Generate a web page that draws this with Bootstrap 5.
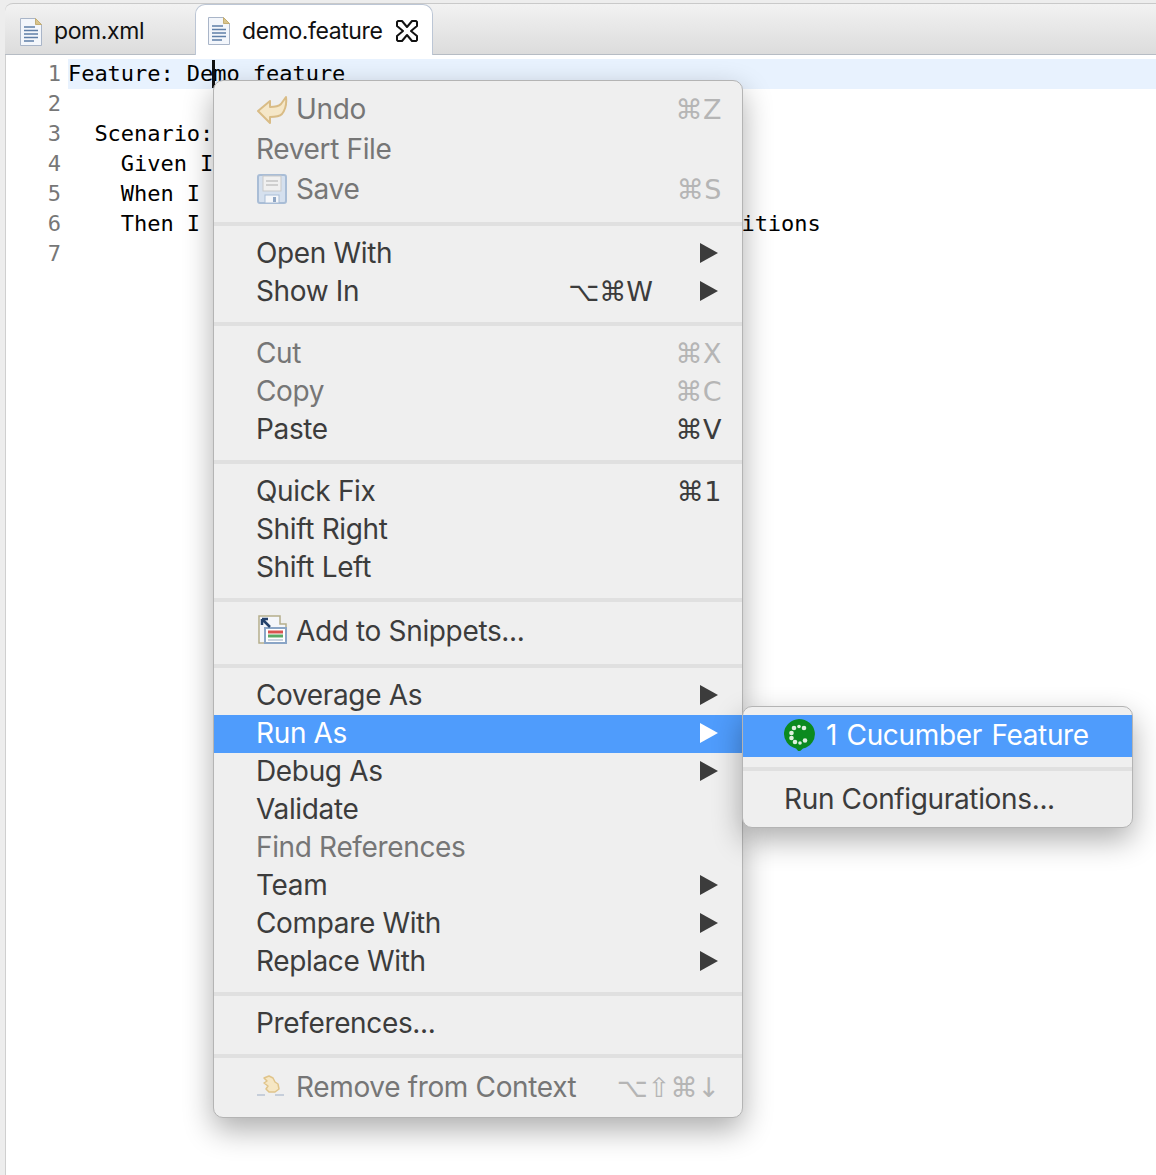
<!DOCTYPE html>
<html lang="en">
<head>
<meta charset="utf-8">
<title>demo.feature</title>
<link href="https://cdn.jsdelivr.net/npm/bootstrap@5.3.0/dist/css/bootstrap.min.css" rel="stylesheet">
<style>
html,body{height:100%;margin:0}
body{background:#fff;overflow:hidden;position:relative;width:1156px;height:1175px}
.ide-frame{height:1175px;background:#ededed;padding:3px 0 0 5px}
.ide-tabs{height:52px;border-top:1px solid #c9c9c9;border-bottom:1px solid #b6bcc4;background:linear-gradient(#f2f2f2,#dcdcdc);flex-wrap:nowrap;margin:0;position:relative;border-top-left-radius:8px}
.ide-tab{height:49px;display:flex;align-items:center;font:23px/1 Inter,"Liberation Sans",sans-serif;color:#111;letter-spacing:-.4px}
.ide-tab svg{flex:none}
.ide-tab-off{width:190px;padding-left:15px;padding-top:6px;gap:12px}
.ide-tab-on{width:238px;height:51px;padding-left:12px;padding-top:2px;gap:12px;background:#fff;border:1px solid #bcc6d5;border-bottom:0;border-radius:10px 10px 0 0}
.ide-close{margin-left:2px}
.ide-editor{background:#fff;height:1120px;border-left:1px solid #cfcfcf;padding-top:4px;font:22px/30px "DejaVu Sans Mono",monospace;color:#000;letter-spacing:-.04px}
.ide-line{display:flex;height:30px;white-space:pre}
.ide-num{width:55px;text-align:right;color:#777;flex:none}
.ide-code{margin-left:7px;flex:1}
.ide-current{background:#e8f2fe}
.ide-caret{position:absolute;left:212px;top:60px;width:3px;height:28px;background:#111}
.ctx-menu.dropdown-menu{display:block;position:absolute;background:#efefef;border:1px solid #b4b4b4;border-radius:10px;box-shadow:0 12px 30px rgba(0,0,0,.32);padding:0;font:28px/38px Inter,"Liberation Sans",sans-serif;color:#3c3c3c;min-width:0;letter-spacing:-.35px}
.ctx-main{left:213px;top:80px;width:530px;height:1038px;padding-top:8px!important}
.ctx-sub{left:742px;top:706px;width:391px;height:122px;padding-top:8px!important;z-index:1001}
.ctx-item.dropdown-item{display:flex;align-items:center;height:38px;padding:0 24px 0 42px;color:#3c3c3c;background:none;font-size:inherit;line-height:38px;white-space:nowrap}
.ctx-item.ctx-tall{height:40px}
.ctx-item.ctx-off{color:#767676}
.ctx-item.ctx-on,.ctx-item.ctx-on:hover{background:#4f9cfc;color:#fff}
.ctx-item.ctx-lift{padding-bottom:2px}
.ctx-label{flex:1;display:flex;align-items:center}
.ctx-icon{flex:none;margin-right:8px;width:32px;height:32px}
.ctx-key{font-family:"DejaVu Sans",sans-serif;font-size:27px;letter-spacing:.5px;margin-right:-4px;padding-top:2px;text-align:right;color:#3c3c3c;white-space:nowrap}
.ctx-off .ctx-key{color:#b5b5b5}
.ctx-key.ctx-key-wide{letter-spacing:0;margin-right:47px}
.ctx-key.ctx-key-w2{letter-spacing:0;margin-right:-2px}
.ctx-arrow{flex:none;width:18px;height:20px;margin-left:auto}
.ctx-sep.dropdown-divider{height:4px;background:#e0e0e0;border:0;opacity:1;margin:12px 0 8px}
.ctx-sep.ctx-gap-a{margin:13px 0 8px}
.ctx-sep.ctx-gap-b{margin:12px 0 9px}
.ctx-sep.ctx-gap-c{margin:13px 0 9px}
.ctx-sep.ctx-gap-d{margin:11px 0 8px}
.ctx-sep.ctx-gap-e{margin:12px 0 10px}
.ctx-sub .ctx-item.dropdown-item{padding-left:41px}
.ctx-sub .ctx-sep.dropdown-divider{margin:10px 0 9px}
.ctx-sub .ctx-item.ctx-sub-on{height:42px;word-spacing:2px;padding-bottom:2px}
.ctx-sub-on .ctx-icon{margin:0 11px 0 -1px}
</style>
</head>
<body>
<div class="ide-frame">
  <div class="ide-tabs d-flex">
    <div class="ide-tab ide-tab-off">
      <svg width="22" height="28" viewBox="2 1 22 28"><path d="M2.500 1.500h15l6 6v21h-21z" fill="#f3f6fb" stroke="#a9b5c8"/><path d="M17.500 1.500v6h6z" fill="#d8c48c" stroke="#c4ae74"/><path d="M6 10h11M6 13.500h14M6 17h14M6 20.500h14M6 24h10" stroke="#5f7fa8" stroke-width="1.600"/></svg>
      <span>pom.xml</span>
    </div>
    <div class="ide-tab ide-tab-on">
      <svg width="22" height="28" viewBox="2 1 22 28"><path d="M2.500 1.500h15l6 6v21h-21z" fill="#f3f6fb" stroke="#a9b5c8"/><path d="M17.500 1.500v6h6z" fill="#d8c48c" stroke="#c4ae74"/><path d="M6 10h11M6 13.500h14M6 17h14M6 20.500h14M6 24h10" stroke="#5f7fa8" stroke-width="1.600"/></svg>
      <span>demo.feature</span>
      <svg class="ide-close" width="22" height="22" viewBox="0 0 22 22"><path d="M2 1h4l5 6 5-6h4l1 1v4l-6 5 6 5v4l-1 1h-4l-5-6-5 6H2l-1-1v-4l6-5-6-5V2z" fill="#fff" stroke="#111" stroke-width="2" stroke-linejoin="round"/></svg>
    </div>
  </div>
  <div class="ide-editor">
    <div class="ide-line"><span class="ide-num">1</span><span class="ide-code ide-current">Feature: Demo feature</span></div>
    <div class="ide-line"><span class="ide-num">2</span><span class="ide-code"></span></div>
    <div class="ide-line"><span class="ide-num">3</span><span class="ide-code">  Scenario:</span></div>
    <div class="ide-line"><span class="ide-num">4</span><span class="ide-code">    Given I</span></div>
    <div class="ide-line"><span class="ide-num">5</span><span class="ide-code">    When I</span></div>
    <div class="ide-line"><span class="ide-num">6</span><span class="ide-code">    Then I                                         itions</span></div>
    <div class="ide-line"><span class="ide-num">7</span><span class="ide-code"></span></div>
  </div>
</div>
<div class="ide-caret"></div>

<div class="dropdown-menu ctx-menu ctx-main show">
  <a class="dropdown-item ctx-item ctx-tall ctx-off"><span class="ctx-label"><svg class="ctx-icon" viewBox="0 0 32 32"><path d="M2 17L14 7v6c6 0 9-1 11-3l5-7c1 8-1 13-4 17-3 3-7 3-12 3v6z" fill="#f5e7c8" stroke="#d9bc86" stroke-width="2" stroke-linejoin="round" transform="translate(0 1)"/></svg>Undo</span><span class="ctx-key">⌘Z</span></a>
  <a class="dropdown-item ctx-item ctx-tall ctx-off"><span class="ctx-label">Revert File</span></a>
  <a class="dropdown-item ctx-item ctx-tall ctx-off"><span class="ctx-label"><svg class="ctx-icon" viewBox="0 0 32 32"><rect x="2" y="2" width="28" height="28" rx="2" fill="#d5e0ee" stroke="#a9bdd6" stroke-width="2"/><rect x="7" y="3" width="18" height="15" fill="#f0f0f0" stroke="#c9c9c9"/><path d="M10 8h12M10 12h12" stroke="#cfcfcf" stroke-width="2"/><rect x="9" y="22" width="14" height="8" fill="#f5f7fa" stroke="#a9bdd6"/><rect x="17" y="24" width="3" height="5" fill="#8fa6c4"/></svg>Save</span><span class="ctx-key">⌘S</span></a>
  <hr class="dropdown-divider ctx-sep ctx-gap-a">
  <a class="dropdown-item ctx-item"><span class="ctx-label">Open With</span><svg class="ctx-arrow" viewBox="0 0 18 20"><path d="M0 0l18 10L0 20z" fill="#3c3c3c"/></svg></a>
  <a class="dropdown-item ctx-item"><span class="ctx-label">Show In</span><span class="ctx-key ctx-key-wide">⌥⌘W</span><svg class="ctx-arrow" viewBox="0 0 18 20"><path d="M0 0l18 10L0 20z" fill="#3c3c3c"/></svg></a>
  <hr class="dropdown-divider ctx-sep">
  <a class="dropdown-item ctx-item ctx-off"><span class="ctx-label">Cut</span><span class="ctx-key">⌘X</span></a>
  <a class="dropdown-item ctx-item ctx-off"><span class="ctx-label">Copy</span><span class="ctx-key">⌘C</span></a>
  <a class="dropdown-item ctx-item"><span class="ctx-label">Paste</span><span class="ctx-key">⌘V</span></a>
  <hr class="dropdown-divider ctx-sep">
  <a class="dropdown-item ctx-item"><span class="ctx-label">Quick Fix</span><span class="ctx-key">⌘1</span></a>
  <a class="dropdown-item ctx-item"><span class="ctx-label">Shift Right</span></a>
  <a class="dropdown-item ctx-item"><span class="ctx-label">Shift Left</span></a>
  <hr class="dropdown-divider ctx-sep ctx-gap-b">
  <a class="dropdown-item ctx-item ctx-tall"><span class="ctx-label"><svg class="ctx-icon" viewBox="0 0 32 32"><path d="M3 1h21v8h6v19H3z" fill="#f4f6fa" stroke="#b5ae8c" stroke-width="1.500"/><rect x="9" y="13" width="21" height="15" fill="#fff" stroke="#8aa5c6" stroke-width="2"/><path d="M12 17h15" stroke="#d9534f" stroke-width="3"/><path d="M12 21h15" stroke="#5aa864" stroke-width="3"/><path d="M12 25h15" stroke="#c9d3df" stroke-width="2"/><path d="M14 12L6 4M6 4v6M6 4h6" stroke="#23416b" stroke-width="2.500" fill="none"/></svg>Add to Snippets...</span></a>
  <hr class="dropdown-divider ctx-sep ctx-gap-c">
  <a class="dropdown-item ctx-item ctx-lift"><span class="ctx-label">Coverage As</span><svg class="ctx-arrow" viewBox="0 0 18 20"><path d="M0 0l18 10L0 20z" fill="#3c3c3c"/></svg></a>
  <a class="dropdown-item ctx-item ctx-on ctx-lift"><span class="ctx-label">Run As</span><svg class="ctx-arrow" viewBox="0 0 18 20"><path d="M0 0l18 10L0 20z" fill="#fff"/></svg></a>
  <a class="dropdown-item ctx-item ctx-lift"><span class="ctx-label">Debug As</span><svg class="ctx-arrow" viewBox="0 0 18 20"><path d="M0 0l18 10L0 20z" fill="#3c3c3c"/></svg></a>
  <a class="dropdown-item ctx-item ctx-lift"><span class="ctx-label">Validate</span></a>
  <a class="dropdown-item ctx-item ctx-off ctx-lift"><span class="ctx-label">Find References</span></a>
  <a class="dropdown-item ctx-item ctx-lift"><span class="ctx-label">Team</span><svg class="ctx-arrow" viewBox="0 0 18 20"><path d="M0 0l18 10L0 20z" fill="#3c3c3c"/></svg></a>
  <a class="dropdown-item ctx-item ctx-lift"><span class="ctx-label">Compare With</span><svg class="ctx-arrow" viewBox="0 0 18 20"><path d="M0 0l18 10L0 20z" fill="#3c3c3c"/></svg></a>
  <a class="dropdown-item ctx-item ctx-lift"><span class="ctx-label">Replace With</span><svg class="ctx-arrow" viewBox="0 0 18 20"><path d="M0 0l18 10L0 20z" fill="#3c3c3c"/></svg></a>
  <hr class="dropdown-divider ctx-sep ctx-gap-d">
  <a class="dropdown-item ctx-item"><span class="ctx-label">Preferences...</span></a>
  <hr class="dropdown-divider ctx-sep ctx-gap-e">
  <a class="dropdown-item ctx-item ctx-off"><span class="ctx-label"><svg class="ctx-icon" viewBox="0 0 32 32"><path d="M1 24h8M19 24h9" stroke="#b9c4d3" stroke-width="1.500"/><path d="M8 7l5-2 4 2 2 4 3 2 1 5-4 3h-6l-3-3 2-3-4-3 3-2z" fill="#f6e7c4" stroke="#e0c48a" stroke-width="1.500" stroke-linejoin="round"/></svg>Remove from Context</span><span class="ctx-key ctx-key-w2">⌥⇧⌘↓</span></a>
</div>

<div class="dropdown-menu ctx-menu ctx-sub show">
  <a class="dropdown-item ctx-item ctx-on ctx-sub-on"><span class="ctx-label"><svg class="ctx-icon" viewBox="0 0 32 32"><path d="M16 0a16 15 0 0 1 4 29.500L16 33l-3-3.500A16 15 0 0 1 16 0z" fill="#0b8a1f"/><g fill="#dff0df"><circle cx="11" cy="9" r="2.300"/><circle cx="16" cy="7.500" r="1.800"/><circle cx="21" cy="9" r="2.300"/><circle cx="8.500" cy="14" r="2.300"/><circle cx="8.500" cy="19" r="2.300"/><circle cx="12" cy="23" r="2.300"/><circle cx="17" cy="24" r="1.800"/><circle cx="22" cy="21.500" r="2.300"/></g></svg>1 Cucumber Feature</span></a>
  <hr class="dropdown-divider ctx-sep">
  <a class="dropdown-item ctx-item"><span class="ctx-label">Run Configurations...</span></a>
</div>
<script src="https://cdn.jsdelivr.net/npm/bootstrap@5.3.0/dist/js/bootstrap.bundle.min.js"></script>
</body>
</html>
